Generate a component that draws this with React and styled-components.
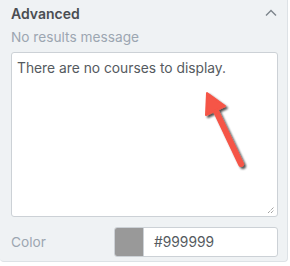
import React from "react";
import styled, { createGlobalStyle } from "styled-components";

const Global = createGlobalStyle`
  body {
    margin: 0;
    background: #fff;
    font-family: Inter, "Open Sans", sans-serif;
  }
`;

const Panel = styled.div`
  position: relative;
  width: 288px;
  height: 262px;
  box-sizing: border-box;
  background: #eff2f4;
  border-right: 1px solid #dde2e6;
  border-bottom: 1px solid #dde2e6;
  border-bottom-right-radius: 4px;
  border-bottom-left-radius: 4px;
  padding: 4px 9px 0 11px;
`;

const Header = styled.div`
  display: flex;
  align-items: center;
  justify-content: space-between;
  height: 18px;
  padding-right: 1px;
`;

const Title = styled.div`
  font-size: 14px;
  font-weight: 600;
  color: #4a4d52;
`;

const Label = styled.div`
  font-size: 13.7px;
  color: #9ca6b1;
  margin: ${(p) => p.$margin || "0"};
`;

const Field = styled.div`
  position: relative;
  height: 165px;
  box-sizing: border-box;
  background: #fff;
  border: 1px solid #ccd1d6;
  border-radius: 3px;
  padding: 7px 5px;
  font-size: 13.8px;
  color: #555a60;
`;

const Grip = styled.svg`
  position: absolute;
  right: 2px;
  bottom: 2px;
`;

const Arrow = styled.svg`
  position: absolute;
  left: 186px;
  top: 32px;
`;

const Row = styled.div`
  display: flex;
  align-items: center;
  justify-content: space-between;
  margin-top: 10px;
`;

const ColorInput = styled.div`
  display: flex;
  width: 164px;
  height: 30px;
  box-sizing: border-box;
  border: 1px solid #ccd1d6;
  border-radius: 3px;
  background: #fff;
  overflow: hidden;
`;

const Swatch = styled.div`
  width: 28px;
  background: ${(p) => p.$color};
  border-right: 1px solid #ccd1d6;
`;

const HexText = styled.div`
  display: flex;
  align-items: center;
  padding-left: 10px;
  font-size: 13.8px;
  color: #555a60;
`;

export default function App() {
  return (
    <>
      <Global />
      <Panel>
        <Header>
          <Title>Advanced</Title>
          <svg width="12" height="8" viewBox="0 0 12 8">
            <path d="M1 6.5 L6 1.5 L11 6.5" fill="none" stroke="#7d848b" strokeWidth="1.4" />
          </svg>
        </Header>
        <Label $margin="7px 0 7px">No results message</Label>
        <Field>
          There are no courses to display.
          <Arrow width="60" height="95" viewBox="0 0 60 95">
            <defs>
              <filter id="sh" x="-30%" y="-30%" width="160%" height="160%">
                <feGaussianBlur in="SourceAlpha" stdDeviation="1.2" />
                <feOffset dx="2" dy="2" result="b" />
                <feComponentTransfer>
                  <feFuncA type="linear" slope="0.7" />
                </feComponentTransfer>
                <feMerge>
                  <feMergeNode />
                  <feMergeNode in="SourceGraphic" />
                </feMerge>
              </filter>
            </defs>
            <g filter="url(#sh)">
              <line x1="43" y1="79" x2="17" y2="24" stroke="#f55446" strokeWidth="6" strokeLinecap="round" />
              <polygon points="9,8 8,30 27,21" fill="#f55446" stroke="#f55446" strokeWidth="2" strokeLinejoin="round" />
            </g>
          </Arrow>
          <Grip width="8" height="8" viewBox="0 0 8 8">
            <path d="M1 7 L7 1 M4 7 L7 4" stroke="#555" strokeWidth="0.8" strokeDasharray="1 1" />
          </Grip>
        </Field>
        <Row>
          <Label>Color</Label>
          <ColorInput>
            <Swatch $color="#999999" />
            <HexText>#999999</HexText>
          </ColorInput>
        </Row>
      </Panel>
    </>
  );
}
